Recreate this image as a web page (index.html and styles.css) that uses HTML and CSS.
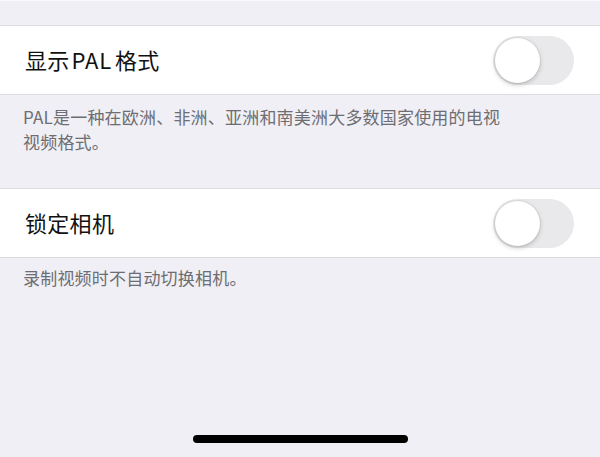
FILE: index.html
```html
<!DOCTYPE html>
<html>
  <head>
    <meta charset="utf-8">
    <title>相机设置</title>
    <link rel="stylesheet" href="styles.css">
  </head>
  <body>
    <div class="page">
      <div class="spacer"></div>

      <div class="row">
        <span class="label">显示<span class="latin">PAL</span>格式</span>
        <div class="switch"><div class="knob"></div></div>
      </div>
      <div class="note first">PAL是一种在欧洲、非洲、亚洲和南美洲大多数国家使用的电视视频格式。</div>

      <div class="row">
        <span class="label">锁定相机</span>
        <div class="switch"><div class="knob"></div></div>
      </div>
      <div class="note">录制视频时不自动切换相机。</div>

      <div class="home"><div class="home-bar"></div></div>
    </div>
  </body>
</html>
```

FILE: styles.css
```css
body {
  margin: 0;
  background-color: #f0eff5;
  font-family: 'Noto Sans CJK SC', 'Noto Sans', sans-serif;
}

.page {
  height: 457px;
  display: flex;
  flex-direction: column;
  border-top: 1px solid #fafafc;
  box-sizing: border-box;
}

.spacer {
  height: 24px;
}

.row {
  height: 68px;
  background-color: #fff;
  border-top: 1px solid #dcdce0;
  border-bottom: 1px solid #dcdce0;
  display: flex;
  align-items: center;
  justify-content: space-between;
  padding: 0 26px 0 25px;
}

.label {
  font-size: 22px;
  color: #111;
  letter-spacing: 0.3px;
  margin-top: -2px;
}

.latin {
  margin: 0 3px 0 2px;
  letter-spacing: 0.8px;
}

.switch {
  width: 81px;
  height: 49px;
  border-radius: 25px;
  background-color: #e9e9eb;
  display: flex;
  align-items: center;
  padding: 0 2px;
  box-sizing: border-box;
}

.knob {
  width: 45px;
  height: 45px;
  border-radius: 50%;
  background-color: #fff;
  box-shadow: 0 2px 5px rgba(0, 0, 0, 0.2), 0 0 0 1px rgba(0, 0, 0, 0.05);
}

.note {
  font-size: 17px;
  line-height: 25px;
  color: #6d6d72;
  letter-spacing: 0.2px;
  padding: 7px 90px 0 23px;
}

.note.first {
  height: 93px;
  padding-top: 9px;
  box-sizing: border-box;
}

.home {
  margin-top: auto;
  display: flex;
  justify-content: center;
  padding-bottom: 14px;
}

.home-bar {
  width: 215px;
  height: 8px;
  border-radius: 4px;
  background-color: #000;
}
```
